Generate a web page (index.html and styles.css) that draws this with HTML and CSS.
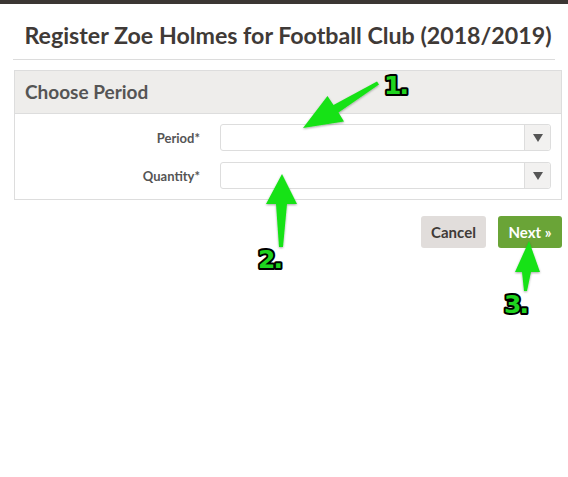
FILE: index.html
```html
<!DOCTYPE html>
<html lang="en">
<head>
    <meta charset="UTF-8">
    <meta name="viewport" content="width=device-width, initial-scale=1.0">
    <title>Register Zoe Holmes</title>
    <link rel="stylesheet" href="styles.css">
</head>
<body>
    <div class="topbar"></div>
    <div class="page">
        <h1>Register Zoe Holmes for Football Club (2018/2019)</h1>
        <hr>
        <div class="panel">
            <div class="panel-header">Choose Period</div>
            <form class="panel-body">
                <div class="row">
                    <label for="period">Period*</label>
                    <div class="select">
                        <span class="select-value" id="period"></span>
                        <span class="select-btn"><span class="caret"></span></span>
                    </div>
                </div>
                <div class="row">
                    <label for="quantity">Quantity*</label>
                    <div class="select">
                        <span class="select-value" id="quantity"></span>
                        <span class="select-btn"><span class="caret"></span></span>
                    </div>
                </div>
            </form>
        </div>
        <div class="actions">
            <button class="btn btn-cancel" type="button">Cancel</button>
            <button class="btn btn-next" type="button">Next &raquo;</button>
        </div>
    </div>

    <!-- annotation arrows drawn over the form -->
    <svg class="notes" width="568" height="477" viewBox="0 0 568 477">
        <defs>
            <filter id="shadow" x="-20%" y="-20%" width="140%" height="140%">
                <feDropShadow dx="0" dy="1" stdDeviation="1" flood-color="#000" flood-opacity="0.35"/>
            </filter>
        </defs>
        <g class="arrow" filter="url(#shadow)">
            <path d="M377 81.5 L379 84.5 L338.5 112.5 L344 121.5 L303 128 L327.5 96 L333.5 105 Z"/>
            <path d="M279 247 L283 247 L287 204 L297 204 L282 174 L266 204 L276 204 Z"/>
            <path d="M524 291 L527 291 L531 272 L540 272 L529 241 L515 272 L522 272 Z"/>
        </g>
        <g class="label">
            <text x="384" y="94">1.</text>
            <text x="258" y="268">2.</text>
            <text x="504" y="313">3.</text>
        </g>
    </svg>
</body>
</html>
```

FILE: styles.css
```css
body {
    font-family: Lato, 'Open Sans', sans-serif;
    margin: 0;
    padding: 0;
    background: #fff;
    color: #4a4542;
}

.topbar {
    height: 4px;
    background: #3b3633;
}

.page {
    padding: 0 6px 0 14px;
}

h1 {
    margin: 0;
    padding: 17px 0 0;
    height: 38px;
    font-size: 23.2px;
    font-weight: bold;
    text-align: center;
    color: #3f3a37;
}

hr {
    border: none;
    border-top: 1px solid #dcdcdc;
    margin: 0 7px 10px -1px;
}

.panel {
    border: 1px solid #ddd;
}

.panel-header {
    background: #eeedeb;
    border-bottom: 1px solid #ddd;
    height: 42px;
    line-height: 42px;
    padding: 0 10px;
    font-size: 19px;
    font-weight: bold;
    color: #555;
}

.panel-body {
    padding: 10px 10px 10px 0;
    display: flex;
    flex-direction: column;
    gap: 11px;
}

.row {
    display: flex;
    align-items: center;
    gap: 20px;
}

.row label {
    width: 185px;
    text-align: right;
    font-size: 13px;
    font-weight: bold;
    color: #555;
}

.select {
    flex: 1;
    display: flex;
    height: 25px;
    border: 1px solid #ddd;
    border-radius: 3px;
    background: #fff;
}

.select-value {
    flex: 1;
}

.select-btn {
    width: 25px;
    border-left: 1px solid #ddd;
    background: #f2f1f0;
    display: flex;
    align-items: center;
    justify-content: center;
    border-radius: 0 3px 3px 0;
}

.caret {
    width: 0;
    height: 0;
    border-left: 5px solid transparent;
    border-right: 5px solid transparent;
    border-top: 8px solid #555;
}

.actions {
    display: flex;
    justify-content: flex-end;
    gap: 12px;
    margin-top: 16px;
}

.btn {
    font-family: Lato, 'Open Sans', sans-serif;
    height: 32px;
    padding: 0 10px;
    border: none;
    border-radius: 3px;
    font-size: 15px;
    font-weight: bold;
    cursor: pointer;
}

.btn-cancel {
    background: #e1dddb;
    color: #3f3a37;
    width: 65px;
}

.btn-next {
    background: #6aa437;
    color: #fff;
    width: 64px;
}

.notes {
    position: absolute;
    left: 0;
    top: 0;
    pointer-events: none;
}

.arrow path {
    fill: #17e217;
}

.label text {
    font-family: 'DejaVu Sans', sans-serif;
    font-weight: bold;
    font-size: 25px;
    fill: #1fd41f;
    stroke: #000;
    stroke-width: 4px;
    paint-order: stroke;
    stroke-linejoin: round;
    letter-spacing: -2px;
}
```
